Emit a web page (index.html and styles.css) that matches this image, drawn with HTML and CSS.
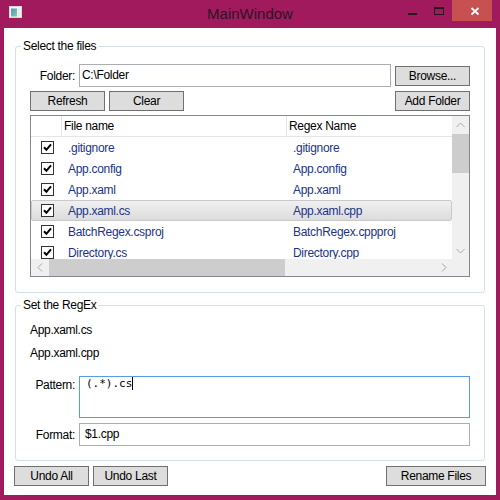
FILE: index.html
```html
<!DOCTYPE html>
<html>
<head>
<meta charset="utf-8">
<title>MainWindow</title>
<link rel="stylesheet" href="styles.css">
</head>
<body>
<div class="window">
  <div class="titlebar">
    <div class="tb-left">
      <svg class="app-icon" width="13" height="12" viewBox="0 0 13 12">
        <defs>
          <linearGradient id="ig" x1="0" y1="0" x2="1" y2="1">
            <stop offset="0" stop-color="#4F8FD8"/>
            <stop offset="1" stop-color="#8CCB8E"/>
          </linearGradient>
        </defs>
        <rect x="0.5" y="0.5" width="12" height="11" fill="#F4F4F4" stroke="#D8D8D8"/>
        <rect x="2" y="2.5" width="6" height="8" fill="url(#ig)"/>
        <rect x="9" y="2.5" width="2" height="8" fill="#E2ECEC"/>
      </svg>
    </div>
    <div class="title">MainWindow</div>
    <div class="controls">
      <div class="ctl">
        <svg width="26" height="21" viewBox="0 0 26 21"><rect x="8" y="13" width="9" height="2" fill="#231820"/></svg>
      </div>
      <div class="ctl">
        <svg width="26" height="21" viewBox="0 0 26 21"><rect x="8.5" y="7.5" width="9" height="7" fill="none" stroke="#231820"/><rect x="8" y="7" width="10" height="2" fill="#231820"/></svg>
      </div>
      <div class="ctl close">
        <svg width="40" height="21" viewBox="0 0 40 21"><path d="M19.5 8 L26.5 14.5 M26.5 8 L19.5 14.5" stroke="#fff" stroke-width="1.8" fill="none"/></svg>
      </div>
    </div>
  </div>

  <div class="client">
    <div class="group group-files">
      <div class="group-title">Select the files</div>
      <div class="folder-row">
        <span class="lbl">Folder:</span>
        <div class="textbox folder-box">C:\Folder</div>
        <button class="btn btn-browse">Browse...</button>
      </div>
      <div class="btn-row">
        <button class="btn">Refresh</button>
        <button class="btn">Clear</button>
        <button class="btn btn-right">Add Folder</button>
      </div>
      <div class="listview">
        <div class="viewport">
          <div class="lv-row lv-header">
            <div class="hc"></div>
            <div class="hc">File name</div>
            <div class="hc">Regex Name</div>
          </div>
          <div class="lv-row">
            <div class="cc"><svg class="cb" width="13" height="13" viewBox="0 0 13 13"><rect x="0.5" y="0.5" width="12" height="12" fill="#fff" stroke="#333"/><path d="M3 6.3 L5.4 8.8 L10 3.4" stroke="#000" stroke-width="2" fill="none"/></svg></div>
            <div class="tc">.gitignore</div>
            <div class="tc">.gitignore</div>
          </div>
          <div class="lv-row">
            <div class="cc"><svg class="cb" width="13" height="13" viewBox="0 0 13 13"><rect x="0.5" y="0.5" width="12" height="12" fill="#fff" stroke="#333"/><path d="M3 6.3 L5.4 8.8 L10 3.4" stroke="#000" stroke-width="2" fill="none"/></svg></div>
            <div class="tc">App.config</div>
            <div class="tc">App.config</div>
          </div>
          <div class="lv-row">
            <div class="cc"><svg class="cb" width="13" height="13" viewBox="0 0 13 13"><rect x="0.5" y="0.5" width="12" height="12" fill="#fff" stroke="#333"/><path d="M3 6.3 L5.4 8.8 L10 3.4" stroke="#000" stroke-width="2" fill="none"/></svg></div>
            <div class="tc">App.xaml</div>
            <div class="tc">App.xaml</div>
          </div>
          <div class="lv-row selected">
            <div class="cc"><svg class="cb" width="13" height="13" viewBox="0 0 13 13"><rect x="0.5" y="0.5" width="12" height="12" fill="#fff" stroke="#333"/><path d="M3 6.3 L5.4 8.8 L10 3.4" stroke="#000" stroke-width="2" fill="none"/></svg></div>
            <div class="tc">App.xaml.cs</div>
            <div class="tc">App.xaml.cpp</div>
          </div>
          <div class="lv-row">
            <div class="cc"><svg class="cb" width="13" height="13" viewBox="0 0 13 13"><rect x="0.5" y="0.5" width="12" height="12" fill="#fff" stroke="#333"/><path d="M3 6.3 L5.4 8.8 L10 3.4" stroke="#000" stroke-width="2" fill="none"/></svg></div>
            <div class="tc">BatchRegex.csproj</div>
            <div class="tc">BatchRegex.cppproj</div>
          </div>
          <div class="lv-row">
            <div class="cc"><svg class="cb" width="13" height="13" viewBox="0 0 13 13"><rect x="0.5" y="0.5" width="12" height="12" fill="#fff" stroke="#333"/><path d="M3 6.3 L5.4 8.8 L10 3.4" stroke="#000" stroke-width="2" fill="none"/></svg></div>
            <div class="tc">Directory.cs</div>
            <div class="tc">Directory.cpp</div>
          </div>
        </div>
        <div class="vbar">
          <div class="arrow"><svg width="9" height="6" viewBox="0 0 9 6"><path d="M0.5 5 L4.5 1 L8.5 5" stroke="#A6A6A6" fill="none"/></svg></div>
          <div class="vthumb"></div>
          <div class="arrow arrow-end"><svg width="9" height="6" viewBox="0 0 9 6"><path d="M0.5 1 L4.5 5 L8.5 1" stroke="#A6A6A6" fill="none"/></svg></div>
        </div>
        <div class="hbar">
          <div class="arrow"><svg width="6" height="9" viewBox="0 0 6 9"><path d="M5 0.5 L1 4.5 L5 8.5" stroke="#A6A6A6" fill="none"/></svg></div>
          <div class="hthumb"></div>
          <div class="arrow arrow-end"><svg width="6" height="9" viewBox="0 0 6 9"><path d="M1 0.5 L5 4.5 L1 8.5" stroke="#A6A6A6" fill="none"/></svg></div>
        </div>
        <div class="corner"></div>
      </div>
    </div>

    <div class="group group-regex">
      <div class="group-title">Set the RegEx</div>
      <div class="line">App.xaml.cs</div>
      <div class="line">App.xaml.cpp</div>
      <div class="form">
        <span class="lbl lbl-top">Pattern:</span>
        <div class="textbox pattern-box"><span class="mono">(.*).cs</span><span class="caret"></span></div>
        <span class="lbl">Format:</span>
        <div class="textbox format-box">$1.cpp</div>
      </div>
    </div>

    <div class="bottom-row">
      <button class="btn">Undo All</button>
      <button class="btn">Undo Last</button>
      <button class="btn btn-rename">Rename Files</button>
    </div>
  </div>
</div>
</body>
</html>
```

FILE: styles.css
```css
* { box-sizing: border-box; }
html, body { margin: 0; padding: 0; }
body {
  width: 500px;
  height: 500px;
  overflow: hidden;
  background: #A11A5E;
  font-family: "Liberation Sans", Arial, sans-serif;
  font-size: 12px;
  letter-spacing: -0.3px;
  color: #000;
}
.window {
  display: flex;
  flex-direction: column;
  height: 500px;
}

/* title bar */
.titlebar {
  height: 28px;
  display: grid;
  grid-template-columns: 1fr auto 1fr;
}
.tb-left { padding: 6px 0 0 9px; }
.app-icon { display: block; }
.title {
  font-size: 15px;
  letter-spacing: 0;
  color: #2A1722;
  line-height: 28px;
  padding-bottom: 1px;
}
.controls {
  display: flex;
  justify-content: flex-end;
  align-items: flex-start;
  padding-right: 8px;
}
.ctl { width: 26px; height: 21px; }
.ctl svg { display: block; }
.ctl.close { width: 40px; background: #C75050; }

/* client */
.client {
  flex: 1;
  margin: 0 4px 5px;
  background: #fff;
  padding: 18px 10px 9px;
  display: flex;
  flex-direction: column;
}
.group {
  position: relative;
  margin: 0 1px;
  border: 1px solid #D5DFE5;
  border-radius: 3px;
}
.group-title {
  position: absolute;
  top: -9px;
  left: 5px;
  padding: 0 2px;
  background: #fff;
  line-height: 16px;
}
.group-files { padding: 17px 14px 15px; }
.group-regex { margin-top: 12px; padding: 13px 14px 14px; }

.lbl {
  width: 49px;
  padding-right: 4px;
  text-align: right;
}
.folder-row {
  display: flex;
  align-items: center;
  height: 23px;
}
.textbox {
  border: 1px solid #ABADB3;
  background: #fff;
  height: 23px;
  line-height: 21px;
  padding: 0 2px;
  white-space: nowrap;
}
.folder-box { flex: 1; }
.btn {
  height: 20px;
  width: 75px;
  padding: 0;
  margin: 0;
  border: 1px solid #707070;
  background: #DDDDDD;
  font-family: inherit;
  font-size: 12px;
  letter-spacing: -0.3px;
  color: #000;
  line-height: 18px;
  border-radius: 0;
}
.btn-browse { margin-left: 4px; }
.btn-row {
  display: flex;
  gap: 4px;
  margin-top: 4px;
}
.btn-right { margin-left: auto; }

/* list view */
.listview {
  margin-top: 4px;
  height: 162px;
  border: 1px solid #828790;
  display: grid;
  grid-template-columns: 1fr 17px;
  grid-template-rows: 1fr 17px;
}
.viewport { overflow: hidden; }
.lv-row {
  display: grid;
  grid-template-columns: 31px 225px 165px;
  height: 21px;
  align-items: center;
  border: 1px solid transparent;
}
.lv-header {
  border: 0;
  border-bottom: 1px solid #E5E5E5;
  align-items: stretch;
}
.hc {
  border-right: 1px solid #E5E5E5;
  padding-left: 2px;
  line-height: 20px;
}
.hc:last-child { border-right: 0; }
.cc { padding-left: 9px; height: 13px; }
.cb { display: block; }
.tc { padding-left: 5px; color: #1B3487; white-space: nowrap; }
.lv-row:not(.lv-header) > .tc:last-child { padding-left: 5px; }
.lv-row.selected {
  background: linear-gradient(#F0F0F0, #DCDCDC);
  border-color: #C9C9C9;
  border-radius: 2px;
}

.vbar, .hbar, .corner { background: #F0F0F0; }
.vbar { display: flex; flex-direction: column; }
.hbar { display: flex; flex-direction: row; }
.arrow {
  width: 17px;
  height: 17px;
  display: flex;
  align-items: center;
  justify-content: center;
  flex: none;
}
.arrow svg { display: block; }
.arrow-end { margin-top: auto; }
.hbar .arrow-end { margin-top: 0; margin-left: auto; }
.vthumb { height: 39px; margin-top: 1px; background: #CDCDCD; }
.hthumb { width: 236px; margin-left: 1px; background: #CDCDCD; }

/* regex group */
.line { line-height: 23px; padding-left: 0; }
.form {
  margin-top: 11px;
  display: grid;
  grid-template-columns: 49px 1fr;
  grid-template-rows: 42px 23px;
  row-gap: 5px;
  align-items: center;
}
.lbl-top { align-self: start; line-height: 18px; }
.pattern-box {
  height: 42px;
  border-color: #569DE5;
  padding: 0 0 0 6px;
  line-height: 14px;
}
.mono {
  font-family: "DejaVu Sans Mono", "Liberation Mono", monospace;
  font-size: 11px;
  letter-spacing: 0;
  vertical-align: top;
}
.caret {
  display: inline-block;
  width: 1px;
  height: 13px;
  background: #000;
  vertical-align: top;
}
.format-box { padding-left: 5px; }

.bottom-row {
  margin-top: 5px;
  display: flex;
  gap: 4px;
}
.btn-rename { width: 100px; margin-left: auto; }
```
